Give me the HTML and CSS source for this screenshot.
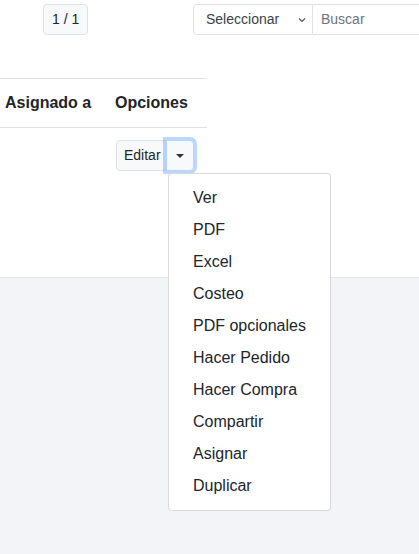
FILE: index.html
```html
<!DOCTYPE html>
<html lang="es">
<head>
<meta charset="utf-8">
<title>Listado</title>
<link rel="stylesheet" href="styles.css">
</head>
<body>
<div class="panel">
  <div class="toolbar">
    <button class="btn btn-light page-btn">1 / 1</button>
    <div class="search-group">
      <div class="select">
        <span>Seleccionar</span>
        <svg class="chev" width="8" height="6" viewBox="0 0 8 6"><path d="M1 1.5 L4 4.5 L7 1.5" fill="none" stroke="#555" stroke-width="1.2"/></svg>
      </div>
      <div class="input">Buscar</div>
    </div>
  </div>
  <table class="table">
    <colgroup><col class="c1"><col class="c2"></colgroup>
    <thead>
      <tr><th class="first">Asignado a</th><th>Opciones</th></tr>
    </thead>
    <tbody>
      <tr>
        <td class="first"></td>
        <td>
          <div class="btn-group">
            <button class="btn btn-light edit-btn">Editar</button>
            <button class="btn btn-light toggle-btn"><span class="caret"></span></button>
            <div class="dropdown-menu">
              <a class="dropdown-item">Ver</a>
              <a class="dropdown-item">PDF</a>
              <a class="dropdown-item">Excel</a>
              <a class="dropdown-item">Costeo</a>
              <a class="dropdown-item">PDF opcionales</a>
              <a class="dropdown-item">Hacer Pedido</a>
              <a class="dropdown-item">Hacer Compra</a>
              <a class="dropdown-item">Compartir</a>
              <a class="dropdown-item">Asignar</a>
              <a class="dropdown-item">Duplicar</a>
            </div>
          </div>
        </td>
      </tr>
    </tbody>
  </table>
</div>
</body>
</html>
```

FILE: styles.css
```css
* { box-sizing: border-box; }
html, body { margin: 0; padding: 0; }
body {
  background: #f3f4f8;
  font-family: "Liberation Sans", Arial, sans-serif;
  color: #212529;
  font-size: 16px;
  line-height: 1.5;
  overflow: hidden;
  height: 554px;
}
.panel {
  background: #fff;
  height: 278px;
  border-bottom: 1px solid #e3e5ea;
}
.toolbar {
  display: flex;
  align-items: flex-start;
  padding: 4px 0 0 43px;
  gap: 105px;
  overflow: hidden;
  white-space: nowrap;
}
.btn {
  font-family: inherit;
  font-size: 14px;
  line-height: 21px;
  height: 31px;
  border-radius: 4px;
  color: #212529;
  margin: 0;
}
.btn-light {
  background: #f8f9fa;
  border: 1px solid #dee2e6;
}
.page-btn {
  width: 45px;
  padding: 0 8px;
}
.search-group {
  display: flex;
  flex: none;
}
.select {
  display: flex;
  align-items: center;
  width: 120px;
  height: 31px;
  padding: 0 0 0 12px;
  border: 1px solid #dee2e6;
  border-radius: 4px 0 0 4px;
  font-size: 14px;
  color: #3a3f44;
}
.select span { flex: 1; }
.chev { margin-right: 6px; }
.input {
  width: 300px;
  height: 31px;
  padding: 0 8px;
  border: 1px solid #dee2e6;
  border-left: none;
  font-size: 14px;
  line-height: 29px;
  color: #6c757d;
}
.table {
  border-collapse: collapse;
  table-layout: fixed;
  width: 207px;
  margin-top: 43px;
}
.c1 { width: 107px; }
.c2 { width: 100px; }
.table th {
  text-align: left;
  font-weight: bold;
  padding: 12px 8px;
  border-top: 1px solid #dee2e6;
  border-bottom: 1px solid #dee2e6;
  white-space: nowrap;
}
.table td {
  padding: 12px 8px;
  vertical-align: top;
}
.table .first { padding-left: 5px; }
.table td:last-child { padding-left: 9px; }
.btn-group {
  position: relative;
  display: inline-flex;
}
.edit-btn {
  padding: 0 6px 0 7px;
  border-radius: 4px 0 0 4px;
  width: 51px;
}
.toggle-btn {
  width: 28px;
  padding: 0;
  margin-left: -1px;
  border-radius: 0 4px 4px 0;
  display: flex;
  align-items: center;
  justify-content: center;
  box-shadow: 0 0 0 3px rgba(13, 110, 253, 0.28);
  border-color: #b6d4fe;
  position: relative;
  z-index: 1;
}
.caret {
  width: 0;
  height: 0;
  border-top: 4px solid #333;
  border-left: 4px solid transparent;
  border-right: 4px solid transparent;
}
.dropdown-menu {
  position: absolute;
  top: calc(100% + 2px);
  left: 52px;
  width: 163px;
  padding: 8px 0;
  background: #fff;
  border: 1px solid rgba(0, 0, 0, 0.15);
  border-radius: 4px;
  z-index: 2;
}
.dropdown-item {
  display: block;
  padding: 4px 24px;
  line-height: 24px;
  font-size: 16px;
  color: #212529;
  white-space: nowrap;
}
```
